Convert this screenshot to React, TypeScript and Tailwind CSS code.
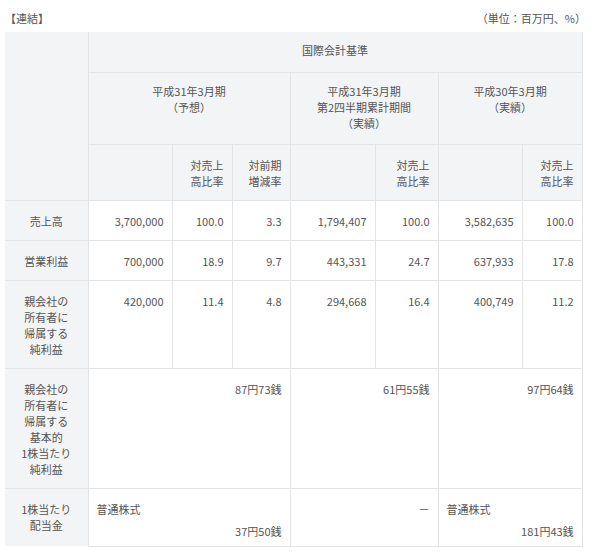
export default function App() {
  const th = "border border-[#e2e4e6] bg-[#f3f4f5] font-normal align-top pt-[10px] px-2 text-center";
  const td = "border border-[#e2e4e6] bg-white align-top pt-[12px] px-2 text-right";
  const lb = "border border-[#e2e4e6] bg-[#f3f4f5] align-top pt-[12px] px-1 text-center";
  return (
    <div className="w-[600px] h-[554px] bg-white text-[#555] text-[11px] leading-[16px]" style={{ fontFamily: '"Noto Sans CJK JP", "Noto Sans", sans-serif' }}>
      <div className="flex justify-between pl-[5px] pr-[14px] pt-[10px] h-[32px]">
        <span>【連結】</span>
        <span>（単位：百万円、%）</span>
      </div>
      <table className="ml-[5px] w-[577px] table-fixed border-collapse">
        <colgroup>
          <col className="w-[83px]" /><col className="w-[84px]" /><col className="w-[60px]" /><col className="w-[58px]" />
          <col className="w-[85px]" /><col className="w-[63px]" /><col className="w-[84px]" /><col className="w-[60px]" />
        </colgroup>
        <tbody>
          <tr className="h-[40px]">
            <th rowSpan={3} className={th + " border-t-0 border-l-0"}></th>
            <th colSpan={7} className={th + " align-middle pt-0 border-t-0"}>国際会計基準</th>
          </tr>
          <tr className="h-[72px]">
            <th colSpan={3} className={th}>平成31年3月期<br />（予想）</th>
            <th colSpan={2} className={th}>平成31年3月期<br />第2四半期累計期間<br />（実績）</th>
            <th colSpan={2} className={th}>平成30年3月期<br />（実績）</th>
          </tr>
          <tr className="h-[56px]">
            <th className={th}></th>
            <th className={th + " text-right pt-[12px]"}>対売上<br />高比率</th>
            <th className={th + " text-right pt-[12px]"}>対前期<br />増減率</th>
            <th className={th}></th>
            <th className={th + " text-right pt-[12px]"}>対売上<br />高比率</th>
            <th className={th}></th>
            <th className={th + " text-right pt-[12px]"}>対売上<br />高比率</th>
          </tr>
          <tr className="h-[40px]">
            <td className={lb + " border-l-0"}>売上高</td>
            <td className={td}>3,700,000</td><td className={td}>100.0</td><td className={td}>3.3</td>
            <td className={td}>1,794,407</td><td className={td}>100.0</td>
            <td className={td}>3,582,635</td><td className={td}>100.0</td>
          </tr>
          <tr className="h-[40px]">
            <td className={lb + " border-l-0"}>営業利益</td>
            <td className={td}>700,000</td><td className={td}>18.9</td><td className={td}>9.7</td>
            <td className={td}>443,331</td><td className={td}>24.7</td>
            <td className={td}>637,933</td><td className={td}>17.8</td>
          </tr>
          <tr className="h-[88px]">
            <td className={lb + " border-l-0"}>親会社の<br />所有者に<br />帰属する<br />純利益</td>
            <td className={td}>420,000</td><td className={td}>11.4</td><td className={td}>4.8</td>
            <td className={td}>294,668</td><td className={td}>16.4</td>
            <td className={td}>400,749</td><td className={td}>11.2</td>
          </tr>
          <tr className="h-[120px]">
            <td className={lb + " border-l-0"}>親会社の<br />所有者に<br />帰属する<br />基本的<br />1株当たり<br />純利益</td>
            <td colSpan={3} className={td}>87円73銭</td>
            <td colSpan={2} className={td}>61円55銭</td>
            <td colSpan={2} className={td}>97円64銭</td>
          </tr>
          <tr className="h-[58px]">
            <td className={lb + " border-l-0 border-b-0 bg-[#f3f4f5]"}>1株当たり<br />配当金</td>
            <td colSpan={3} className={td}>
              <div className="text-left">普通株式</div>
              <div className="mt-[6px]">37円50銭</div>
            </td>
            <td colSpan={2} className={td}>－</td>
            <td colSpan={2} className={td}>
              <div className="text-left">普通株式</div>
              <div className="mt-[6px]">181円43銭</div>
            </td>
          </tr>
        </tbody>
      </table>
    </div>
  );
}
